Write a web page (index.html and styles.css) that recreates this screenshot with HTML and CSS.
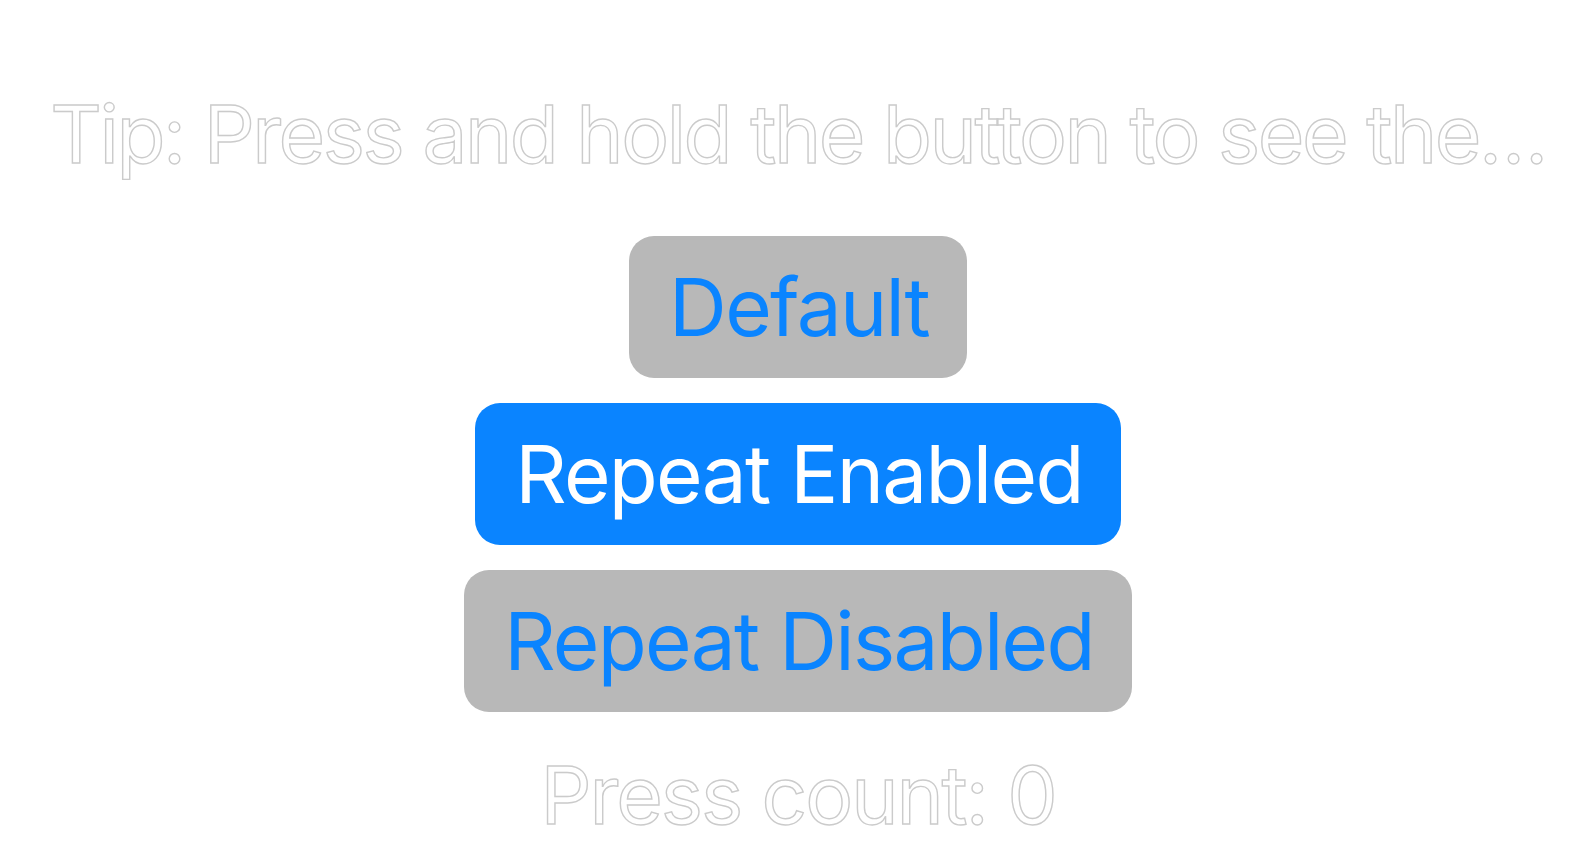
FILE: index.html
```html
<!DOCTYPE html>
<html lang="en">
<head>
<meta charset="utf-8">
<title>Button Repeat</title>
<link rel="stylesheet" href="styles.css">
</head>
<body>
<main class="screen">
  <p class="tip outlined">Tip: Press and hold the button to see the…</p>
  <div class="buttons">
    <button class="btn btn-gray">Default</button>
    <button class="btn btn-blue">Repeat Enabled</button>
    <button class="btn btn-gray">Repeat Disabled</button>
  </div>
  <p class="count outlined">Press count: 0</p>
</main>
</body>
</html>
```

FILE: styles.css
```css
html, body {
  margin: 0;
  padding: 0;
  background: #ffffff;
}

.screen {
  width: 1596px;
  height: 855px;
  box-sizing: border-box;
  padding-top: 94px;
  display: flex;
  flex-direction: column;
  align-items: center;
  font-family: Inter, "Liberation Sans", sans-serif;
  font-size: 80px;
  line-height: 1;
  letter-spacing: -1.7px;
  font-variant-ligatures: none;
  font-feature-settings: "calt" 0, "liga" 0;
  overflow: hidden;
}

.tip,
.count {
  margin: 0;
  white-space: nowrap;
}

.outlined {
  color: #ffffff;
  -webkit-text-stroke: 1.4px #cbcbcb;
}

.tip {
  margin-bottom: 62px;
  letter-spacing: -2.45px;
}

.buttons {
  display: flex;
  flex-direction: column;
  align-items: center;
  gap: 25px;
}

.btn {
  font: inherit;
  letter-spacing: inherit;
  font-variant-ligatures: none;
  font-feature-settings: "calt" 0, "liga" 0;
  line-height: 1;
  border: none;
  border-radius: 25px;
  padding: 31px 38px 31px 40px;
  margin: 0;
  cursor: pointer;
}

.btn-gray {
  background: #b8b8b8;
  color: #0a84ff;
}

.btn-blue {
  background: #0a84ff;
  color: #ffffff;
}

.count {
  margin-top: 43px;
  letter-spacing: -2.05px;
}
```
